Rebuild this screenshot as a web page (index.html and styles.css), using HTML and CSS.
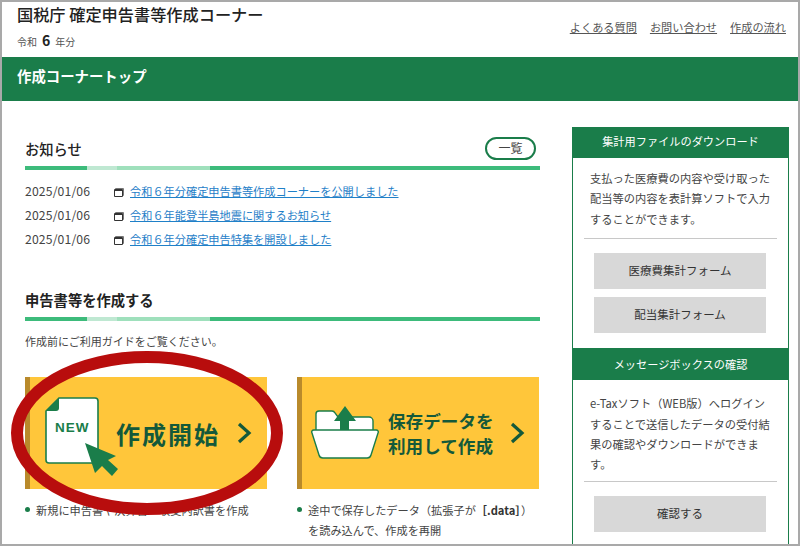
FILE: index.html

```html
<!DOCTYPE html>
<html lang="ja">
<head>
  <meta charset="UTF-8" />
  <title>確定申告書等作成コーナー</title>
  <link rel="stylesheet" href="styles.css">
</head>
<body>
  <div class="frame">
    <header class="site-head">
      <div>
        <div class="site-title">国税庁 確定申告書等作成コーナー</div>
        <div class="site-year">令和<b>6</b>年分</div>
      </div>
      <nav class="site-nav">
        <a href="#">よくある質問</a>
        <a href="#">お問い合わせ</a>
        <a href="#">作成の流れ</a>
      </nav>
    </header>

    <div class="page-bar">作成コーナートップ</div>

    <div class="columns">
      <main class="main">
        <div class="sec-head">
          <h2>お知らせ</h2>
          <a class="pill" href="#">一覧</a>
        </div>
        <div class="rule"><i></i><i></i><i></i><i></i></div>
        <ul class="news">
          <li><span class="date">2025/01/06</span><span class="ext"></span><a href="#">令和６年分確定申告書等作成コーナーを公開しました</a></li>
          <li><span class="date">2025/01/06</span><span class="ext"></span><a href="#">令和６年能登半島地震に関するお知らせ</a></li>
          <li><span class="date">2025/01/06</span><span class="ext"></span><a href="#">令和６年分確定申告特集を開設しました</a></li>
        </ul>

        <div class="sec-head sec-head-2">
          <h2 class="strong">申告書等を作成する</h2>
        </div>
        <div class="rule"><i></i><i></i><i></i><i></i></div>
        <p class="lead">作成前にご利用ガイドをご覧ください。</p>

        <div class="cards">
          <div class="card-col">
            <a class="card" href="#">
              <svg class="ico-new" width="74" height="80" viewBox="0 0 74 80">
                <path d="M14 1H50a3 3 0 0 1 3 3V63a3 3 0 0 1-3 3H4a3 3 0 0 1-3-3V14Z" fill="#fff" stroke="#1a7d4a" stroke-width="1.6"/>
                <path d="M1 14 14 1V11a3 3 0 0 1-3 3Z" fill="#1a7d4a"/>
                <text x="10" y="35" class="ico-text">NEW</text>
                <path d="M40 46 71 59 63 63 73 72 67 79 57 69 50 76Z" fill="#1a7d4a"/>
              </svg>
              <span class="card-big">作成開始</span>
              <svg class="chev" width="15" height="22" viewBox="0 0 15 22"><path d="M2 2 12 11 2 20" fill="none" stroke="#14593a" stroke-width="3.200"/></svg>
            </a>
            <ul class="notes">
              <li>新規に申告書や決算書・収支内訳書を作成</li>
            </ul>
          </div>
          <div class="card-col">
            <a class="card" href="#">
              <svg class="ico-folder" width="68" height="54" viewBox="0 0 68 54">
                <path d="M5 27V8a3 3 0 0 1 3-3H21q2 0 3 2l3 4H58a4 4 0 0 1 4 4V27Z" fill="#fff" stroke="#1a7d4a" stroke-width="1.400"/>
                <path d="M34 0 45 15H38V25H29V15H23Z" fill="#1a7d4a"/>
                <path d="M3 24H65a2 2 0 0 1 2 3L60 49a4 4 0 0 1-4 3H12a4 4 0 0 1-4-3L1 27a2 2 0 0 1 2-3Z" fill="#fff" stroke="#1a7d4a" stroke-width="1.400"/>
              </svg>
              <span class="card-mid">保存データを<br>利用して作成</span>
              <svg class="chev" width="15" height="22" viewBox="0 0 15 22"><path d="M2 2 12 11 2 20" fill="none" stroke="#14593a" stroke-width="3.200"/></svg>
            </a>
            <ul class="notes">
              <li>途中で保存したデータ（拡張子が<b>［.data］</b>）<br>を読み込んで、作成を再開</li>
            </ul>
          </div>
        </div>
      </main>

      <aside class="side">
        <h3 class="side-head">集計用ファイルのダウンロード</h3>
        <div class="side-body">
          <p class="side-text">支払った医療費の内容や受け取った配当等の内容を表計算ソフトで入力することができます。</p>
          <div class="side-btns">
            <a class="btn" href="#">医療費集計フォーム</a>
            <a class="btn" href="#">配当集計フォーム</a>
          </div>
        </div>
        <h3 class="side-head side-head-2">メッセージボックスの確認</h3>
        <div class="side-body side-body-2">
          <p class="side-text">e-Taxソフト（WEB版）へログインすることで送信したデータの受付結果の確認やダウンロードができます。</p>
          <div class="side-btns">
            <a class="btn" href="#">確認する</a>
          </div>
        </div>
      </aside>
    </div>

    <svg class="circle" width="800" height="546" viewBox="0 0 800 546">
      <ellipse cx="147" cy="433" rx="130" ry="76" fill="none" stroke="#b80d0d" stroke-width="12"/>
    </svg>
  </div>
</body>
</html>
```

FILE: styles.css

```css
* {
  box-sizing: border-box;
}

body {
  margin: 0;
  font-family: "Noto Sans CJK JP", "Noto Sans", sans-serif;
  color: #333;
  background: #fff;
}

a {
  color: inherit;
}

.frame {
  position: relative;
  width: 800px;
  height: 546px;
  overflow: hidden;
  border: 2px solid #a9a9a9;
}

/* header */
.site-head {
  height: 55px;
  padding: 3px 12px 0 15px;
  display: flex;
  justify-content: space-between;
}

.site-title {
  font-size: 16.200px;
  line-height: 18px;
  font-weight: 500;
  color: #222;
}

.site-year {
  margin-top: 7px;
  font-size: 10px;
  line-height: 20px;
  color: #555;
}

.site-year b {
  margin: 0 5px;
  font-size: 14px;
  color: #222;
}

.site-nav {
  display: flex;
  gap: 13px;
  padding-top: 14px;
  font-size: 11.200px;
  color: #555;
}

.page-bar {
  height: 44px;
  padding-left: 15px;
  background: #1a7d4a;
  color: #fff;
  font-size: 14.400px;
  font-weight: 700;
  line-height: 38px;
}

/* columns */
.columns {
  display: flex;
  padding: 26px 9px 0 23px;
  gap: 32px;
}

.main {
  width: 515px;
  flex: none;
}

.side {
  width: 217px;
  flex: none;
}

.sec-head {
  height: 39px;
  padding-top: 10px;
  display: flex;
  justify-content: space-between;
  align-items: flex-start;
}

.sec-head h2 {
  margin: 0;
  font-size: 14.300px;
  line-height: 24px;
  font-weight: 500;
  color: #222;
}

.sec-head h2.strong {
  font-weight: 700;
}

.sec-head-2 {
  height: 35px;
  margin-top: 31px;
  padding-top: 6px;
}

.pill {
  width: 51px;
  height: 23px;
  margin-right: 4px;
  border: 2px solid #1a7d4a;
  border-radius: 12px;
  font-size: 12px;
  line-height: 18px;
  text-align: center;
  text-decoration: none;
  color: #444;
}

.rule {
  display: flex;
  height: 4px;
}

.rule i:nth-child(1) {
  width: 62px;
  background: #3dbb7b;
}

.rule i:nth-child(2) {
  width: 30px;
  background: #bfe8d2;
}

.rule i:nth-child(3) {
  width: 93px;
  background: #9fe0bc;
}

.rule i:nth-child(4) {
  flex: 1;
  background: #3dbb7b;
}

/* news */
.news {
  list-style: none;
  margin: 9px 0 0;
  padding: 0;
  font-size: 11.200px;
}

.news li {
  display: flex;
  align-items: center;
  height: 24px;
}

.date {
  width: 89px;
  color: #444;
  font-size: 12.200px;
  letter-spacing: 0.150px;
}

.ext {
  width: 9px;
  height: 8px;
  margin-right: 7px;
  margin-top: 3px;
  border: 1px solid #333;
  border-top-width: 2px;
  border-radius: 1px;
  box-shadow: 1px -1px 0 #777;
}

.news a {
  color: #1f80c8;
}

.lead {
  margin: 10px 0 0;
  font-size: 11px;
  line-height: 20px;
  color: #444;
}

/* cards */
.cards {
  display: flex;
  gap: 30px;
  margin-top: 26px;
}

.card-col {
  width: 242px;
}

.card {
  display: flex;
  align-items: center;
  height: 112px;
  padding-left: 15px;
  background: #ffc63a;
  border-left: 5px solid #b98a2b;
  text-decoration: none;
  color: #14593a;
}

.ico-new {
  flex: none;
  margin-top: 7px;
}

.ico-text {
  font-family: "Liberation Sans", sans-serif;
  font-size: 13.500px;
  font-weight: 700;
  letter-spacing: 1px;
  fill: #1a7d4a;
}

.card-big {
  width: 121px;
  margin-left: -3px;
  font-size: 24px;
  font-weight: 700;
  letter-spacing: 2px;
  white-space: nowrap;
}

.ico-folder {
  flex: none;
  margin-left: -6px;
}

.card-mid {
  width: 122px;
  margin-left: 9px;
  font-size: 17.600px;
  line-height: 25px;
  font-weight: 700;
  white-space: nowrap;
}

.chev {
  flex: none;
}

.notes {
  list-style: none;
  margin: 11px 0 0;
  padding: 0 0 0 11px;
  font-size: 11.200px;
  line-height: 20px;
  color: #444;
}

.notes li {
  position: relative;
}

.notes li::before {
  content: "";
  position: absolute;
  left: -11px;
  top: 7px;
  width: 5px;
  height: 5px;
  border-radius: 50%;
  background: #1a7d4a;
}

.notes b {
  color: #333;
}

/* sidebar */
.side-head {
  margin: 0;
  height: 31px;
  background: #1a7d4a;
  color: #fff;
  font-size: 11.200px;
  font-weight: 400;
  line-height: 29px;
  text-align: center;
}

.side-head-2 {
  height: 32px;
  line-height: 32px;
}

.side-body {
  border: solid #1a7d4a;
  border-width: 0 1px;
  padding: 10px 11px 15px;
}

.side-text {
  margin: 0;
  padding: 0 6px 9px;
  font-size: 11.250px;
  line-height: 20.400px;
  color: #444;
  border-bottom: 1px solid #c8c8c8;
}

.side-body-2 {
  padding-top: 13px;
}

.side-body-2 .side-text {
  padding-bottom: 6px;
}

.side-btns {
  display: flex;
  flex-direction: column;
  gap: 8px;
  padding: 14px 11px 0 10px;
}

.btn {
  height: 36px;
  background: #d8d8d8;
  font-size: 11.500px;
  line-height: 35px;
  text-align: center;
  text-decoration: none;
  color: #333;
}

/* hand-drawn red circle over the first card */
.circle {
  position: absolute;
  left: -2px;
  top: -2px;
}
```
